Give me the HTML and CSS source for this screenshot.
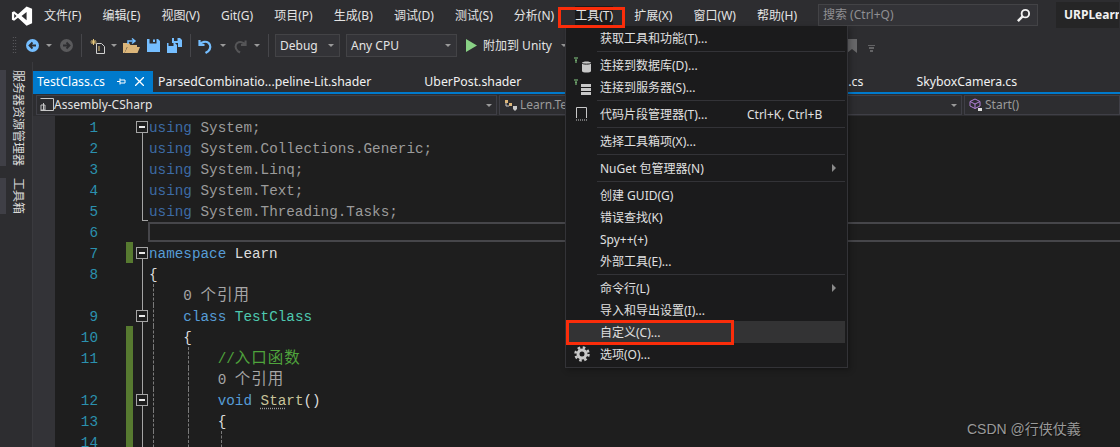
FILE: index.html
```html
<!DOCTYPE html>
<html lang="zh-CN">
<head>
<meta charset="utf-8">
<title>Visual Studio</title>
<link rel="stylesheet" href="styles.css">
</head>
<body>
<div class="app">
  <header class="titlebar">
    <svg class="logo" viewBox="0 0 24 24"><path fill="#fff" fill-rule="evenodd" d="M17 1.500 7.600 10 3.400 6.800 1 8v8l2.400 1.200L7.600 14 17 22.500 23 20V4ZM17 7.500 11.500 12 17 16.500ZM3.500 9.500 6 12 3.500 14.500Z"/></svg>
    <nav class="menubar">
      <span>文件(F)</span><span>编辑(E)</span><span>视图(V)</span><span>Git(G)</span><span>项目(P)</span><span>生成(B)</span><span>调试(D)</span><span>测试(S)</span><span>分析(N)</span><span class="active">工具(T)</span><span>扩展(X)</span><span>窗口(W)</span><span>帮助(H)</span>
    </nav>
    <div class="search">
      <span>搜索 (Ctrl+Q)</span>
      <svg viewBox="0 0 16 16" width="15" height="15"><circle cx="10" cy="6" r="4" fill="none" stroke="#f1f1f1" stroke-width="2"/><path d="M7 9 2 14" stroke="#f1f1f1" stroke-width="2.600"/></svg>
    </div>
    <div class="project">URPLearn</div>
  </header>

  <div class="toolbar">
    <i class="grip"></i>
    <svg class="m9" width="13" height="13" viewBox="0 0 13 13"><circle cx="6.500" cy="6.500" r="6.500" fill="#75beff"/><path d="M10 6.500H4M6.500 3.500l-3 3 3 3" fill="none" stroke="#2d2d30" stroke-width="1.800"/></svg>
    <i class="caret m7"></i>
    <svg class="m8" width="13" height="13" viewBox="0 0 13 13"><circle cx="6.500" cy="6.500" r="6.500" fill="#5a5a5c"/><path d="M3 6.500h6M6.500 3.500l3 3-3 3" fill="none" stroke="#2d2d30" stroke-width="1.800"/></svg>
    <i class="sep m8"></i>
    <svg class="m8" width="16" height="16" viewBox="0 0 16 16"><path d="M6.500 5.500h5l3 3v7h-8z" fill="none" stroke="#d0d0d0"/><path d="M9 8v5M3.500 1v6M.5 4h6M1.500 2l4 4M5.500 2l-4 4" stroke="#e8c87a"/></svg>
    <i class="caret m5"></i>
    <svg class="m6" width="17" height="16" viewBox="0 0 17 16"><path d="M0 5h6l1.500 2H14v2H4L1.500 15H0z" fill="#dcb67a"/><path d="M4.500 9H17l-2.500 6h-13z" fill="#dcb67a"/><path d="M5 6V3h6M9 .5 12 3 9 5.500" fill="none" stroke="#75beff" stroke-width="1.500"/></svg>
    <svg class="m7" width="13" height="13" viewBox="0 0 13 13"><path d="M0 0h2.500v4.500h7V0H11l2 2v11H0z" fill="#75beff"/><rect x="6" y=".5" width="2" height="2.500" fill="#75beff"/></svg>
    <svg class="m7" width="15" height="15" viewBox="0 0 15 15"><path d="M5 0h2v3h3.500V0H13l2 2v7h-4V5H5z" fill="#75beff"/><path d="M0 5h1.500v3h5V5H8l2 2v8H0z" fill="#75beff"/></svg>
    <i class="sep m8"></i>
    <svg class="m7" width="14" height="16" viewBox="0 0 14 16"><path d="M1.500 2v5h5M1.800 6.500C4 3.500 8 3 10.500 4.800 13 7 13 10.500 10 13.500L7.500 15" fill="none" stroke="#75beff" stroke-width="2.200"/></svg>
    <i class="caret m8"></i>
    <svg class="m8" width="13" height="16" viewBox="0 0 14 16"><path d="M12.500 2v5h-5M12.200 6.500C10 3.500 6 3 3.500 4.800 1 7 1 10.500 4 13.500L6.500 15" fill="none" stroke="#555557" stroke-width="2.200"/></svg>
    <i class="caret m7"></i>
    <i class="sep m8"></i>
    <div class="select debug m6"><span>Debug</span><i class="caret"></i></div>
    <div class="select cpu m6"><span>Any CPU</span><i class="caret"></i></div>
    <svg class="m9" width="11" height="13" viewBox="0 0 11 13"><path d="M0 0 11 6.500 0 13z" fill="#89d185"/></svg>
    <span class="attach m6">附加到 Unity</span>
    <i class="caret m9"></i>
    <div class="tb-end">
      <svg width="10" height="14" viewBox="0 0 10 14"><path d="M0 0h10v14L5 10 0 14z" fill="#68686a"/></svg>
      <svg class="filter" width="7" height="7" viewBox="0 0 7 7"><path d="M0 0h7M1 3h5M2 6h3" stroke="#9a9a9a"/></svg>
    </div>
  </div>

  <div class="main">
    <aside class="sidebar">
      <div class="side-item">服务器资源管理器</div>
      <div class="side-item">工具箱</div>
    </aside>
    <section class="workspace">
      <div class="tabs">
        <div class="tab current"><span>TestClass.cs</span><svg width="9" height="9" viewBox="0 0 9 9"><path d="M3 1.500v6M3 3h5v3H3M0 4.500h3" fill="none" stroke="#fff"/></svg><svg class="close" width="9" height="9" viewBox="0 0 9 9"><path d="m0 0 9 9M9 0 0 9" stroke="#fff" stroke-width="1.300"/></svg></div>
        <div class="tab">ParsedCombinatio...peline-Lit.shader</div>
        <div class="tab">UberPost.shader</div>
        <div class="tab covered">.cs</div>
        <div class="tab">SkyboxCamera.cs</div>
      </div>
      <div class="navbar">
        <div class="nav-box assembly">
          <svg width="14" height="14" viewBox="0 0 14 14"><path d="M.5.500h13v12H.5M3.500 5v7" fill="none" stroke="#c8c8c8"/><path d="M1 7h4v5H1z" fill="none" stroke="#c8c8c8"/></svg>
          <span>Assembly-CSharp</span><i class="caret"></i>
        </div>
        <div class="nav-box scope">
          <svg width="14" height="14" viewBox="0 0 14 14"><path d="M1 2h3v3H1zM5 5h3v3H5z" fill="#dcb67a"/><path d="M9 8h4v3l-2 2-2-2z" fill="#c8c8c8"/><path d="M2 5v3h3" stroke="#c8c8c8" fill="none"/></svg>
          <span>Learn.TestClass</span><i class="caret"></i>
        </div>
        <div class="nav-box member">
          <svg width="14" height="14" viewBox="0 0 14 14"><path d="M6 1 11 3.500V8L6 10.500 1 8V3.500zM1 3.500 6 6l5-2.500M6 6v4.500" fill="none" stroke="#b180d7"/><rect x="9" y="10" width="4" height="3" fill="#ddd"/></svg>
          <span>Start()</span>
        </div>
      </div>
      <div class="editor">
        <div class="row"><i class="mg"></i><b class="ln">1</b><i class="ch"></i><i class="fold open"><u></u></i><code><span class="kwf">using</span> <span class="dim">System;</span></code></div>
        <div class="row"><i class="mg"></i><b class="ln">2</b><i class="ch"></i><i class="fold line"></i><code><span class="kwf">using</span> <span class="dim">System.Collections.Generic;</span></code></div>
        <div class="row"><i class="mg"></i><b class="ln">3</b><i class="ch"></i><i class="fold line"></i><code><span class="kwf">using</span> <span class="dim">System.Linq;</span></code></div>
        <div class="row"><i class="mg"></i><b class="ln">4</b><i class="ch"></i><i class="fold line"></i><code><span class="kwf">using</span> <span class="dim">System.Text;</span></code></div>
        <div class="row"><i class="mg"></i><b class="ln">5</b><i class="ch"></i><i class="fold end"></i><code><span class="kwf">using</span> <span class="dim">System.Threading.Tasks;</span></code></div>
        <div class="row"><i class="mg"></i><b class="ln">6</b><i class="ch"></i><i class="fold"></i><code class="currentline"></code></div>
        <div class="row"><i class="mg"></i><b class="ln">7</b><i class="ch on"></i><i class="fold open"><u></u></i><code><span class="kw">namespace</span> Learn</code></div>
        <div class="row"><i class="mg"></i><b class="ln">8</b><i class="ch"></i><i class="fold line"></i><code><span class="brace">{</span></code></div>
        <div class="row"><i class="mg"></i><b class="ln"></b><i class="ch"></i><i class="fold line"></i><code><s class="g1"></s>    <span class="ref">0 <span class="cjk">个引用</span></span></code></div>
        <div class="row"><i class="mg"></i><b class="ln">9</b><i class="ch"></i><i class="fold line"><u></u></i><code><s class="g1"></s>    <span class="kw">class</span> <span class="type">TestClass</span></code></div>
        <div class="row"><i class="mg"></i><b class="ln">10</b><i class="ch on"></i><i class="fold line"></i><code><s class="g1"></s>    <span class="brace">{</span></code></div>
        <div class="row"><i class="mg"></i><b class="ln">11</b><i class="ch on"></i><i class="fold line"></i><code><s class="g1"></s><s class="g2"></s>        <span class="cm">//<span class="cjk">入口函数</span></span></code></div>
        <div class="row"><i class="mg"></i><b class="ln"></b><i class="ch on"></i><i class="fold line"></i><code><s class="g1"></s><s class="g2"></s>        <span class="ref">0 <span class="cjk">个引用</span></span></code></div>
        <div class="row"><i class="mg"></i><b class="ln">12</b><i class="ch on"></i><i class="fold line"><u></u></i><code><s class="g1"></s><s class="g2"></s>        <span class="kw">void</span> <span class="fn"><span class="hint">Sta</span>rt</span>()</code></div>
        <div class="row"><i class="mg"></i><b class="ln">13</b><i class="ch on"></i><i class="fold line"></i><code><s class="g1"></s><s class="g2"></s>        <span class="brace">{</span></code></div>
        <div class="row"><i class="mg"></i><b class="ln">14</b><i class="ch on"></i><i class="fold line"></i><code><s class="g1"></s><s class="g2"></s><s class="g3"></s></code></div>
      </div>
    </section>
  </div>

  <div class="dropdown">
    <div class="item"><span>获取工具和功能(T)...</span></div>
    <hr>
    <div class="item">
      <svg class="ico" width="18" height="16" viewBox="0 0 18 16"><path d="M0 1h4M1 3h2M2 3v3" stroke="#89d185"/><path d="M8 6c0-2 9-2 9 0v8c0 2-9 2-9 0z" fill="#c8c8c8"/><path d="M8 6c0 1.500 9 1.500 9 0" fill="none" stroke="#1b1b1c"/></svg>
      <span>连接到数据库(D)...</span>
    </div>
    <div class="item">
      <svg class="ico" width="18" height="16" viewBox="0 0 18 16"><path d="M0 1h4M1 3h2M2 3v3" stroke="#89d185"/><path d="M7 5h10v3H7zM7 9h10v3H7zM7 13h10v3H7z" fill="#c8c8c8"/></svg>
      <span>连接到服务器(S)...</span>
    </div>
    <hr>
    <div class="item">
      <svg class="ico" width="18" height="16" viewBox="0 0 18 16"><path d="M2.500 12V1.500h10V12" fill="none" stroke="#c8c8c8"/><path d="M2 14h11" stroke="#c8c8c8" stroke-dasharray="1 1"/></svg>
      <span>代码片段管理器(T)...</span><em>Ctrl+K, Ctrl+B</em>
    </div>
    <hr>
    <div class="item"><span>选择工具箱项(X)...</span></div>
    <hr>
    <div class="item"><span>NuGet 包管理器(N)</span><i class="arrow"></i></div>
    <hr>
    <div class="item"><span>创建 GUID(G)</span></div>
    <div class="item"><span>错误查找(K)</span></div>
    <div class="item"><span>Spy++(+)</span></div>
    <div class="item"><span>外部工具(E)...</span></div>
    <hr>
    <div class="item"><span>命令行(L)</span><i class="arrow"></i></div>
    <div class="item"><span>导入和导出设置(I)...</span></div>
    <div class="item hover"><span>自定义(C)...</span></div>
    <div class="item">
      <svg class="ico" width="16" height="16" viewBox="0 0 16 16"><circle cx="8" cy="8" r="4" fill="none" stroke="#c8c8c8" stroke-width="3"/><circle cx="8" cy="8" r="6.500" fill="none" stroke="#c8c8c8" stroke-width="2.500" stroke-dasharray="2.550 2.550"/></svg>
      <span>选项(O)...</span>
    </div>
  </div>

  <div class="mark mark-tools"></div>
  <div class="mark mark-custom"></div>
  <div class="watermark">CSDN @行侠仗義</div>
</div>
</body>
</html>
```

FILE: styles.css
```css
* { box-sizing: border-box; }
html, body { margin: 0; padding: 0; background: #1e1e1e; }
.app {
  position: relative;
  width: 1120px;
  height: 447px;
  overflow: hidden;
  display: flex;
  flex-direction: column;
  background: #2d2d30;
  color: #f1f1f1;
  font: 12px/16px "Noto Sans", "Noto Sans CJK SC", sans-serif;
}
i, b, em, u, s { font-style: normal; font-weight: normal; text-decoration: none; }

/* title bar */
.titlebar { height: 32px; display: flex; align-items: center; flex: none; }
.logo { width: 22px; height: 22px; margin-left: 11px; flex: none; }
.menubar { display: flex; margin-left: 11px; width: 776px; flex: none; white-space: nowrap; }
.menubar span { margin-right: 21.100px; line-height: 20px; color: #e4e4e4; }
.menubar .active { background: #1b1b1c; }
.search {
  margin-left: -2px;
  margin-top: -2px;
  width: 220px;
  height: 22px;
  flex: none;
  display: flex;
  align-items: center;
  justify-content: space-between;
  padding: 0 6px 0 4px;
  border: 1px solid #434346;
  background: #333337;
  color: #8f8f92;
}
.project {
  margin-left: 18px;
  width: 63px;
  height: 26px;
  margin-top: -3px;
  padding-left: 8px;
  flex: none;
  background: #252526;
  font-weight: 700;
  line-height: 26px;
  white-space: nowrap;
  overflow: hidden;
}

/* tool bar */
.toolbar { height: 30px; flex: none; display: flex; align-items: center; padding: 0 0 3px 12px; color: #e4e4e4; }
.toolbar svg { flex: none; }
.grip {
  width: 5px;
  height: 19px;
  flex: none;
  background-image: radial-gradient(#66666a 0.7px, transparent 0.8px);
  background-size: 2.500px 3px;
}
.caret { width: 0; height: 0; flex: none; border: 3px solid transparent; border-top: 3px solid #9a9a9a; border-bottom: 0; display: block; }
.sep { width: 1px; height: 23px; flex: none; background: #46464a; }
.m5 { margin-left: 5px; }
.m6 { margin-left: 6px; }
.m7 { margin-left: 7px; }
.m8 { margin-left: 8px; }
.m9 { margin-left: 9px; }
.select {
  height: 23px;
  flex: none;
  display: flex;
  align-items: center;
  justify-content: space-between;
  padding: 0 5px 0 4px;
  border: 1px solid #434346;
  background: #333337;
}
.debug { width: 65px; }
.cpu { width: 111px; }
.attach { white-space: nowrap; }
.tb-end { margin-left: auto; margin-right: 245px; display: flex; align-items: center; gap: 11px; }
.filter { margin-top: 5px; }

/* main */
.main { flex: 1; min-height: 0; display: flex; }
.sidebar { width: 33px; flex: none; padding-top: 8px; display: flex; flex-direction: column; gap: 12px; border-right: 1px solid #3a3a3e; }
.side-item {
  writing-mode: vertical-rl;
  text-orientation: sideways;
  border-left: 6px solid #3f3f46;
  width: 27px;
  line-height: 18px;
  color: #d8d8d8;
  white-space: nowrap;
}
.workspace { flex: 1; min-width: 0; display: flex; flex-direction: column; padding-top: 9px; }
.tabs { height: 23px; flex: none; display: flex; border-bottom: 2px solid #007acc; white-space: nowrap; font-size: 12.300px; }
.tab { padding: 0 48px 0 5px; line-height: 21px; color: #f1f1f1; flex: none; }
.tab.current { width: 120px; padding: 0 0 0 4px; background: #007acc; color: #fff; display: flex; align-items: center; }
.tab.current span { width: 80px; }
.tab.current .close { margin-left: 9px; }
.tab.covered { width: 342px; text-align: right; }
.navbar { height: 22px; flex: none; display: flex; padding: 1px 0 0 3px; gap: 2px; }
.nav-box { height: 20px; flex: none; display: flex; align-items: center; border: 1px solid #3f3f46; background: #2d2d30; color: #9a9a9a; white-space: nowrap; padding: 0 4px; gap: 2px; position: relative; overflow: hidden; }
.nav-box .caret { position: absolute; right: 4px; top: 8px; }
.assembly { width: 461px; color: #e4e4e4; padding-left: 3px; gap: 0; }
.scope { width: 463px; }
.member { flex: 1; padding-left: 4px; }

/* editor */
.editor { flex: 1; min-height: 0; overflow: hidden; background: #1e1e1e; }
.row { height: 21px; display: flex; font: 14.300px/24px "Liberation Mono", "Noto Sans CJK SC", monospace; color: #dcdcdc; }
.mg { width: 22px; flex: none; background: #333337; }
.ln { width: 43px; flex: none; text-align: right; color: #2b91af; margin-right: 28px; }
.ch { width: 7px; margin-right: 3px; flex: none; height: 21px; }
.ch.on { background: #577a30; }
.fold { width: 13px; flex: none; position: relative; height: 21px; }
.fold.line::before, .fold.end::before { content: ""; position: absolute; left: 6px; top: 0; bottom: 0; width: 1px; background: #a5a5a5; }
.fold.open::before { content: ""; position: absolute; left: 6px; top: 10px; bottom: 0; width: 1px; background: #a5a5a5; }
.fold.end::after { content: ""; position: absolute; left: 6px; bottom: 0; width: 6px; height: 1px; background: #a5a5a5; }
.fold u { position: absolute; left: 0; top: 5px; width: 12px; height: 12px; background: #1e1e1e; border: 1px solid #a5a5a5; }
.fold u::after { content: ""; position: absolute; left: 2px; top: 4px; width: 6px; height: 2px; background: #e8e8e8; }
code { flex: 1; font: inherit; white-space: pre; position: relative; height: 21px; }
.currentline { border: 2px solid #46464a; margin-top: 1px; height: 20px; margin-left: -1px; margin-right: -6px; }
.kw { color: #569cd6; }
.kwf { color: #3d6ba5; }
.dim { color: #9b9b9b; }
.type { color: #4ec9b0; }
.fn { color: #c8c49a; }
.hint { text-decoration: underline dotted #9a9a9a; text-underline-offset: 3px; }
.cm { color: #4fa33c; }
.ref { color: #a6a6a6; }
.brace { color: #dcdcdc; }
.cjk { font-family: "Noto Sans CJK SC", sans-serif; font-size: 15.500px; line-height: 1; letter-spacing: 1px; }
s { position: absolute; top: 0; bottom: 0; width: 0; border-left: 1px dashed #7a7a7a; }
.g1 { left: 4px; }
.g2 { left: 39px; }
.g3 { left: 72px; top: 0; }

/* dropdown */
.dropdown {
  position: absolute;
  left: 565px;
  top: 26px;
  width: 283px;
  height: 342px;
  padding: 1px 2px 3px 1px;
  background: #1b1b1c;
  border: 1px solid #333337;
  border-top: 0;
  box-shadow: 2px 2px 6px rgba(0, 0, 0, 0.3);
}
.dropdown hr { height: 1px; margin: 2px 0 2px 30px; border: 0; background: #333337; }
.item { height: 22px; display: flex; align-items: center; padding: 2px 0 0 33px; position: relative; color: #e0e0e0; white-space: nowrap; }
.item.hover { background: #333334; }
.item em { position: absolute; left: 180px; }
.ico { position: absolute; left: 7px; top: 3px; }
.arrow { position: absolute; right: 9px; top: 7px; border-left: 4px solid #8a8a8a; border-top: 4px solid transparent; border-bottom: 4px solid transparent; }

/* annotations */
.mark { position: absolute; border: 3px solid #fa2d0a; }
.mark-tools { left: 558px; top: 7px; width: 67px; height: 21px; }
.mark-custom { left: 566px; top: 320px; width: 168px; height: 25px; }
.watermark { position: absolute; left: 967px; top: 420px; font: 14px/18px "Liberation Sans", "Noto Sans CJK SC", sans-serif; color: #9a9a9a; text-shadow: 1px 1px 1px #111; white-space: nowrap; }
```
